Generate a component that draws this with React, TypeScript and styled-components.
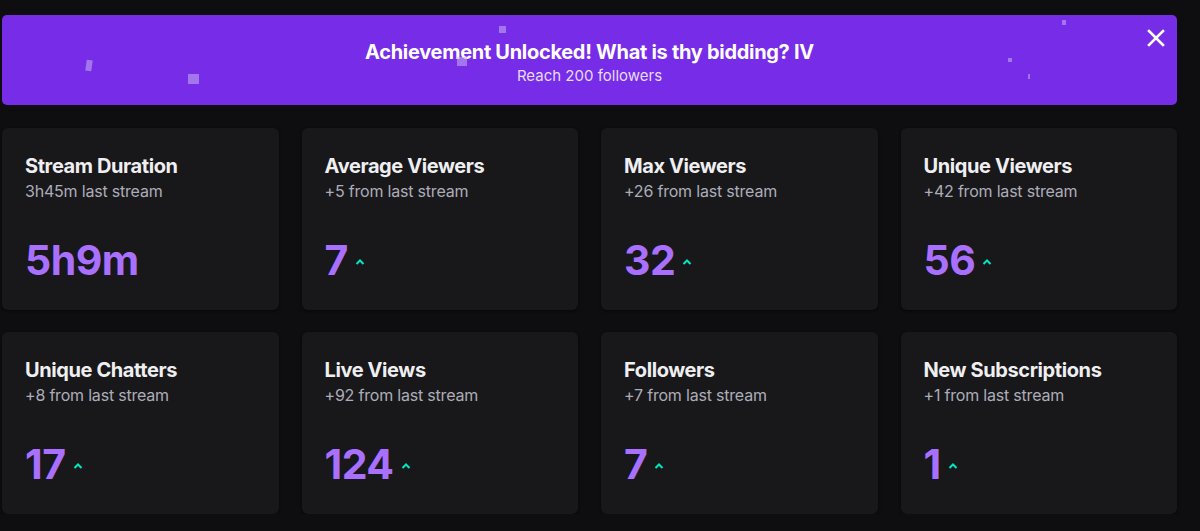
import styled, { createGlobalStyle } from "styled-components";

const GlobalStyle = createGlobalStyle`
  html, body {
    margin: 0;
    padding: 0;
    background: #0e0e10;
    font-family: Inter, "Noto Sans", sans-serif;
    color: #efeff1;
  }
`;

const Page = styled.div`
  width: 1175px;
  padding: 15px 0 0 2px;
  display: flex;
  flex-direction: column;
  gap: 23px;
`;

const Banner = styled.div`
  position: relative;
  height: 90px;
  box-sizing: border-box;
  padding-top: 6px;
  border-radius: 5px;
  background: #772ce8;
  display: flex;
  flex-direction: column;
  align-items: center;
  justify-content: center;
  overflow: hidden;
`;

const BannerTitle = styled.h2`
  margin: 0;
  font-size: 20px;
  font-weight: 700;
  line-height: 26px;
  letter-spacing: -0.3px;
  color: #fff;
`;

const BannerSub = styled.p`
  margin: 0;
  font-size: 15px;
  line-height: 22px;
  color: #e6dcfa;
`;

const Confetti = styled.span<{ $x: number; $y: number; $w: number; $h: number; $r?: number }>`
  position: absolute;
  left: ${(p) => p.$x}px;
  top: ${(p) => p.$y}px;
  width: ${(p) => p.$w}px;
  height: ${(p) => p.$h}px;
  background: rgba(200, 180, 240, 0.55);
  transform: rotate(${(p) => p.$r || 0}deg);
`;

const CloseButton = styled.button`
  position: absolute;
  top: 12px;
  right: 10px;
  width: 22px;
  height: 22px;
  padding: 0;
  border: none;
  background: none;
  display: flex;
  align-items: center;
  justify-content: center;
  cursor: pointer;
`;

const Grid = styled.div`
  display: grid;
  grid-template-columns: repeat(4, 1fr);
  column-gap: 23px;
  row-gap: 22px;
`;

const Card = styled.div`
  height: 182px;
  box-sizing: border-box;
  padding: 25px 23px;
  border-radius: 6px;
  background: #18181b;
  box-shadow: 0 1px 3px rgba(0, 0, 0, 0.6);
  display: flex;
  flex-direction: column;
`;

const CardTitle = styled.h3`
  margin: 0;
  font-size: 20px;
  font-weight: 700;
  line-height: 26px;
  letter-spacing: -0.4px;
  color: #efeff1;
`;

const CardSub = styled.p`
  margin: 0;
  font-size: 16px;
  line-height: 24px;
  letter-spacing: -0.2px;
  color: #adadb8;
`;

const ValueRow = styled.div`
  margin-top: 31px;
  display: flex;
  align-items: center;
  gap: 7px;
`;

const Value = styled.span`
  font-size: 41px;
  font-weight: 700;
  line-height: 52px;
  letter-spacing: -0.5px;
  color: #a970ff;
`;

const Caret = styled.svg`
  width: 10px;
  height: 6px;
  margin-top: 4px;
`;

interface IStat {
  title: string;
  sub: string;
  value: string;
  up: boolean;
}

const stats: IStat[] = [
  { title: "Stream Duration", sub: "3h45m last stream", value: "5h9m", up: false },
  { title: "Average Viewers", sub: "+5 from last stream", value: "7", up: true },
  { title: "Max Viewers", sub: "+26 from last stream", value: "32", up: true },
  { title: "Unique Viewers", sub: "+42 from last stream", value: "56", up: true },
  { title: "Unique Chatters", sub: "+8 from last stream", value: "17", up: true },
  { title: "Live Views", sub: "+92 from last stream", value: "124", up: true },
  { title: "Followers", sub: "+7 from last stream", value: "7", up: true },
  { title: "New Subscriptions", sub: "+1 from last stream", value: "1", up: true },
];

// confetti pieces, placed relative to the banner
const confetti = [
  { x: 84, y: 45, w: 6, h: 11, r: 8 },
  { x: 186, y: 59, w: 11, h: 10 },
  { x: 497, y: 11, w: 7, h: 7 },
  { x: 455, y: 42, w: 10, h: 9 },
  { x: 1006, y: 43, w: 4, h: 4 },
  { x: 1026, y: 59, w: 2, h: 5 },
  { x: 1060, y: 5, w: 4, h: 5 },
];

function App() {
  return (
    <>
      <GlobalStyle />
      <Page>
        <Banner>
          {confetti.map((c, i) => (
            <Confetti key={i} $x={c.x} $y={c.y} $w={c.w} $h={c.h} $r={c.r} />
          ))}
          <BannerTitle>Achievement Unlocked! What is thy bidding? IV</BannerTitle>
          <BannerSub>Reach 200 followers</BannerSub>
          <CloseButton aria-label="Close">
            <svg width="18" height="18" viewBox="0 0 18 18">
              <path
                d="M2 2 L16 16 M16 2 L2 16"
                stroke="#fff"
                strokeWidth="2.6"
                strokeLinecap="square"
              />
            </svg>
          </CloseButton>
        </Banner>
        <Grid>
          {stats.map((s) => (
            <Card key={s.title}>
              <CardTitle>{s.title}</CardTitle>
              <CardSub>{s.sub}</CardSub>
              <ValueRow>
                <Value>{s.value}</Value>
                {s.up ? (
                  <Caret viewBox="0 0 10 6">
                    <path
                      d="M1.5 5 L5 1.5 L8.5 5"
                      fill="none"
                      stroke="#00e6c0"
                      strokeWidth="2"
                    />
                  </Caret>
                ) : null}
              </ValueRow>
            </Card>
          ))}
        </Grid>
      </Page>
    </>
  );
}

export default App;
